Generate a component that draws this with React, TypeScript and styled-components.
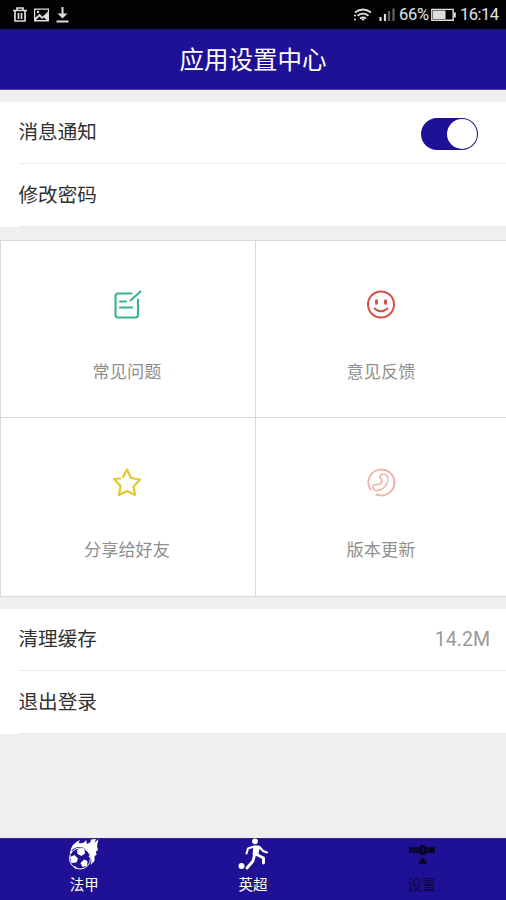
import React from "react";
import styled, { createGlobalStyle } from "styled-components";

const navy = "#1f1195";

const GlobalStyle = createGlobalStyle`
  * { box-sizing: border-box; }
  body { margin: 0; background: #efefef; }
`;

const Screen = styled.div`
  display: flex;
  flex-direction: column;
  width: 506px;
  height: 900px;
  overflow: hidden;
  background: #efefef;
  font-family: Roboto, "Noto Sans CJK SC", sans-serif;
`;

const StatusBar = styled.div`
  display: flex;
  flex: none;
  justify-content: space-between;
  height: 29px;
  background: #020204;
  color: #e4e4e4;
`;

const StatusInfo = styled.div`
  display: flex;
  line-height: 30px;
  font-size: 16.5px;
`;

const StatusText = styled.span<{ $width: number; $spacing?: number }>`
  width: ${(p) => p.$width}px;
  letter-spacing: ${(p) => p.$spacing ?? 0}px;
  white-space: nowrap;
`;

const Header = styled.header`
  flex: none;
  height: 61px;
  border-top: 1px solid #1a1170;
  border-bottom: 1px solid #5145a8;
  background: ${navy};
  color: #fff;
  font-size: 24.5px;
  line-height: 61px;
  text-align: center;
`;

const List = styled.section<{ $top: number }>`
  flex: none;
  margin-top: ${(p) => p.$top}px;
  background: #fff;
`;

const Row = styled.div<{ $height: number }>`
  display: flex;
  align-items: center;
  justify-content: space-between;
  height: ${(p) => p.$height}px;
  margin-left: 18.5px;
  padding-right: 16px;
  border-bottom: 1px solid #ececec;
  color: #303030;
  font-size: 19.6px;
  line-height: 28px;
`;

const RowLabel = styled.span`
  margin-top: 1px;
`;

const RowValue = styled.span`
  color: #999;
`;

const Switch = styled.span`
  display: flex;
  justify-content: flex-end;
  width: 57px;
  height: 32px;
  margin: 3px 12px 0 0;
  padding: 1px;
  border-radius: 16px;
  background: ${navy};
`;

const Knob = styled.span`
  width: 30px;
  height: 30px;
  border-radius: 50%;
  background: #fff;
`;

const Grid = styled.section`
  display: grid;
  flex: none;
  grid-template-columns: 255px 250px;
  grid-template-rows: 177px 178px;
  height: 357px;
  margin-top: 13px;
  border: 1px solid #d9d9d9;
  border-right: 0;
  background: #fff;
`;

const Tile = styled.div<{ $right?: boolean; $bottom?: boolean }>`
  display: flex;
  flex-direction: column;
  align-items: center;
  padding-top: ${(p) => (p.$bottom ? 46 : 45)}px;
  padding-right: ${(p) => (p.$right ? 0 : 2)}px;
  border-right: ${(p) => (p.$right ? "0" : "1px solid #d9d9d9")};
  border-bottom: ${(p) => (p.$bottom ? "0" : "1px solid #d9d9d9")};
`;

const TileLabel = styled.span`
  margin-top: 37px;
  color: #8f8f8f;
  font-size: 17.2px;
  line-height: 26px;
`;

const TabBar = styled.nav`
  display: grid;
  flex: none;
  grid-template-columns: repeat(3, 1fr);
  height: 62px;
  margin-top: auto;
  border-top: 1px solid #33278e;
  background: ${navy};
`;

const Tab = styled.div<{ $active?: boolean }>`
  display: flex;
  flex-direction: column;
  align-items: center;
  color: ${(p) => (p.$active ? "#0d083f" : "#fff")};
  font-size: 14.5px;
  line-height: 22px;

  svg {
    overflow: visible;
  }
`;

const TabLabel = styled.span`
  margin-top: 3px;
`;

const NotificationIcons = () => (
  <svg width="90" height="29" fill="none" stroke="#dedede" strokeWidth="1.7">
    <path d="M13 10.5h14M17 10V8h6v2M15 11v10h10V11M18.5 13v6M21.5 13v6" />
    <path fill="#dedede" stroke="none" fillRule="evenodd" d="M34 8.500h15v13H34zM35.200 9.800v8l4.300-4 3 3 5.300-5v-2zM36 20l3.500-3.500 2.500 2.500 2-1.500 2.500 2.500z" />
    <circle cx="38" cy="12" r="1.2" fill="#dedede" stroke="none" />
    <path d="M62.5 7v10M56.5 21.5h12" strokeWidth="2" />
    <path d="M57.5 13.5h10l-5 5z" fill="#dedede" stroke="none" />
  </svg>
);

const SignalIcons = () => (
  <svg width="45" height="29" fill="none" stroke="#dedede" strokeWidth="1.8">
    <path d="M1 12.500Q9 6.500 17 12.500M3.500 15.800Q9 11.500 14.500 15.800M6 18.500Q9 16.400 12 18.500" />
    <path d="m7 18.500 2 2.500 2-2.500z" fill="#dedede" stroke="none" />
    <path d="M0 15.500h2M0 19.500h2" strokeWidth="1.500" />
    <path d="M26.500 21v-4M31 21v-7" strokeWidth="2.200" />
    <path d="M35 21V11M39.500 21V8.500" stroke="#626262" strokeWidth="2.200" />
  </svg>
);

const BatteryIcon = () => (
  <svg width="29" height="29">
    <path d="M.8 9.400h21.400v10.800H.8z" fill="none" stroke="#dedede" strokeWidth="1.400" />
    <path d="M2 10.500h12.500v8.600H2zM23 12.500h1.800v5H23z" fill="#dedede" />
  </svg>
);

const NoteIcon = () => (
  <svg width="34" height="36" viewBox="0 0 34 36" fill="none" stroke="#35b392" strokeWidth="2.100" strokeLinecap="round">
    <path d="M21.500 7.500H8A2.500 2.500 0 0 0 5.500 10v19A2.500 2.500 0 0 0 8 31.500h17.500A2.500 2.500 0 0 0 28 29V13.500" />
    <path d="M10 15.500h6M10 21.500h12M20.500 14.500 30.500 5.500" />
  </svg>
);

const SmileIcon = () => (
  <svg width="34" height="36" viewBox="0 0 34 36" fill="none" stroke="#d45148" strokeWidth="2" strokeLinecap="round">
    <circle cx="17" cy="18.500" r="13" />
    <path d="M12.500 14.800v2.400M21.500 14.800v2.400" strokeWidth="3" />
    <path d="M10.500 22.500q6.500 5.500 13 0" />
  </svg>
);

const StarIcon = () => (
  <svg width="34" height="36" viewBox="0 0 34 36" fill="none" stroke="#e4c82e" strokeWidth="2.200" strokeLinecap="round" strokeLinejoin="round">
    <path d="m13 13 4-7.500 4 8.500 9 1.500-6.500 7 1.500 8.500-8-4-8 4 1.500-9L4 15l6-.5" />
  </svg>
);

const PhoneIcon = () => (
  <svg width="34" height="36" viewBox="0 0 34 36" fill="none" stroke="#f0b5ac" strokeWidth="2" strokeLinecap="round" strokeLinejoin="round">
    <path d="M6.500 25.500A13 13 0 1 1 12.500 30.500" />
    <path d="M16 13c0-3.500 5-4 7-1 1.800 3.500.5 8-2.500 11-3 2.800-7 4.500-10 3-2.500-1.500-1.800-5.500 1-5.500 2 0 3.500.5 4.800-.8 1.400-1.300 2.200-2.500 1.200-4-.8-1-1.500-1.500-1.500-2.700z" strokeWidth="1.700" />
  </svg>
);

const FlamingBallIcon = () => (
  <svg width="34" height="33" viewBox="0 0 34 33">
    <path d="M3 13Q5 4 13 1l-1.500 3Q17 5 19 1l1 4q4-1 4-4.500L29 0l-1.500 4 4-4-1.500 7 1 4-2 1.500.5 3.500-2 1v5l-4 4 1-4Q24 13 17 9 9 6 3 13z" fill="#fff" />
    <circle cx="13" cy="19.500" r="10.500" fill={navy} stroke="#fff" strokeWidth="1" />
    <path d="m10 11 3.500-2 4 1.500.5 4-3.500 2.500-4-2zM3 18l4.500-2 3.500 3.500-1.500 4-5 .5zM13.500 24l3.500-3.500 3.500 1.500-.5 4.500-4.500 1.500z" fill="#fff" />
    <path d="m3 14 2-2M9.500 29.500l-2-2M22 18l2-2" stroke="#fff" strokeWidth="1.200" />
  </svg>
);

const PlayerIcon = () => (
  <svg width="34" height="33" viewBox="0 0 34 33" fill="none" stroke="#fff" strokeLinecap="round" strokeLinejoin="round">
    <circle cx="19" cy="2.300" r="2.900" fill="#fff" stroke="none" />
    <circle cx="5.500" cy="27" r="3" fill="#fff" stroke="none" />
    <path d="M18.500 8h4L21 15.500h-3z" fill="#fff" strokeWidth="2.800" />
    <path d="m18 7.500-6 2-1.500 5M23.500 8l3.500 4 4 1.500" strokeWidth="2.100" />
    <path d="m18.500 16-1.500 6-6 7M20.500 15.500l7 3.500v5" strokeWidth="2.900" />
  </svg>
);

const SettingsIcon = () => (
  <svg width="34" height="33" viewBox="0 0 34 33" fill="#09071f">
    <path d="M4 8.300h11V6h5.500v2.300H30v5.400h-9.500V16H15v-2.300H4zM17.800 18.300l4.800 6.500H13z" />
    <path d="M6 11h7.500M17.800 8v6M21.500 11H24" stroke={navy} strokeWidth=".9" />
  </svg>
);

export default function App() {
  return (
    <>
      <GlobalStyle />
      <Screen>
        <StatusBar>
          <NotificationIcons />
          <StatusInfo>
            <SignalIcons />
            <StatusText $width={32} $spacing={-0.3}>66%</StatusText>
            <BatteryIcon />
            <StatusText $width={46} $spacing={-0.5}>16:14</StatusText>
          </StatusInfo>
        </StatusBar>
        <Header>应用设置中心</Header>
        <List $top={12}>
          <Row $height={62}>
            <RowLabel>消息通知</RowLabel>
            <Switch><Knob /></Switch>
          </Row>
          <Row $height={63}><RowLabel>修改密码</RowLabel></Row>
        </List>
        <Grid>
          <Tile><NoteIcon /><TileLabel>常见问题</TileLabel></Tile>
          <Tile $right><SmileIcon /><TileLabel>意见反馈</TileLabel></Tile>
          <Tile $bottom><StarIcon /><TileLabel>分享给好友</TileLabel></Tile>
          <Tile $right $bottom><PhoneIcon /><TileLabel>版本更新</TileLabel></Tile>
        </Grid>
        <List $top={12}>
          <Row $height={62}><RowLabel>清理缓存</RowLabel><RowValue>14.2M</RowValue></Row>
          <Row $height={63}><RowLabel>退出登录</RowLabel></Row>
        </List>
        <TabBar>
          <Tab><FlamingBallIcon /><TabLabel>法甲</TabLabel></Tab>
          <Tab><PlayerIcon /><TabLabel>英超</TabLabel></Tab>
          <Tab $active><SettingsIcon /><TabLabel>设置</TabLabel></Tab>
        </TabBar>
      </Screen>
    </>
  );
}
